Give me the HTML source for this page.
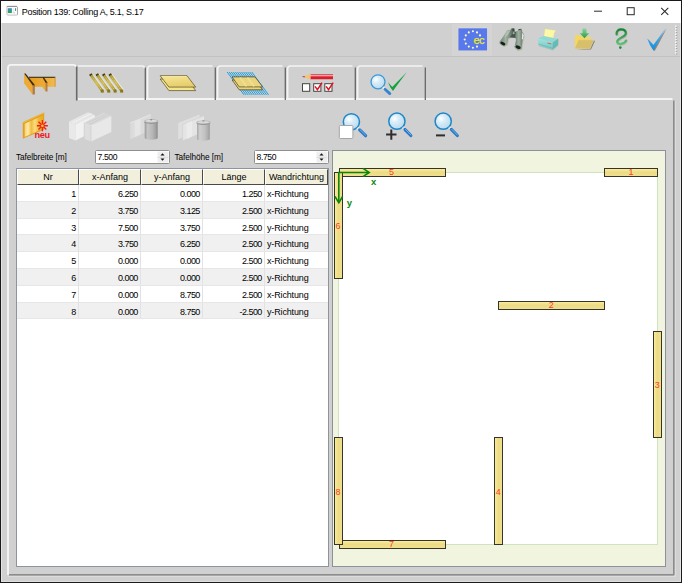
<!DOCTYPE html>
<html><head><meta charset="utf-8"><title>Position 139</title>
<style>
*{box-sizing:border-box;margin:0;padding:0}
html,body{width:682px;height:583px;overflow:hidden;background:#d0d0d0}
body{font-family:"Liberation Sans",sans-serif;font-size:9px;color:#000;position:relative}
.abs{position:absolute}
#win{position:absolute;left:0;top:0;width:682px;height:583px;border:1px solid #1a1a1a;background:#d0d0d0}
#title{position:absolute;left:1px;top:1px;width:680px;height:22px;background:#fff}
#title .t{position:absolute;left:20.7px;top:4.9px;font-size:9px;line-height:12px;white-space:nowrap;letter-spacing:-0.275px;color:#000}
#tbline{position:absolute;left:1px;top:56px;width:680px;height:1px;background:#c2c2c2}
.lbl{position:absolute;font-size:8.25px;line-height:12px;white-space:nowrap;letter-spacing:-0.07px}
.spin{position:absolute;height:14px;border:1px solid #8f8f8f;background:#fff;border-radius:1.5px}
.spin span{position:absolute;left:1.6px;top:0.4px;font-size:8.6px;line-height:12px;letter-spacing:-0.42px}
.spin svg{position:absolute;right:0;top:0}
/* table */
#grid{position:absolute;left:16px;top:168px;width:313px;height:399px;border:1px solid #8d949c;background:#fff}
.hd{position:absolute;top:0;height:16px;background:#f2f0dd;border-left:1px solid #fff;border-top:1px solid #fff;border-right:1px solid #4a4a4a;border-bottom:1px solid #4a4a4a;text-align:center;font-size:9px;line-height:14px;white-space:nowrap}
.row{position:absolute;left:0;width:311px;height:17px;border-bottom:1px solid #e6e6e6}
.row.alt{background:#f0f0f0}
.row span{position:absolute;top:0;height:100%;line-height:18px;font-size:9px;white-space:nowrap;border-right:1px solid #e2e2e2}
.row .n{text-align:right;padding-right:2.2px;letter-spacing:-0.55px}
.row .s{text-align:left;padding-left:2px;letter-spacing:-0.15px;border-right:none}
/* canvas */
#cv{position:absolute;left:332px;top:150px;width:334px;height:417px;border:1px solid #8a919b;background:#f1f4df}
</style></head><body>
<div id="win">
</div>
<div id="title"><div class="t">Position 139: Colling A, 5.1, S.17</div></div>
<div id="tbline"></div>
<svg id="tctl" class="abs" style="left:0;top:0" width="682" height="24" viewBox="0 0 682 24">
 <g id="appicon">
  <defs><linearGradient id="gApp" x1="0" y1="0" x2="0" y2="1"><stop offset="0" stop-color="#4a88c4"/><stop offset="0.5" stop-color="#2f9a90"/><stop offset="1" stop-color="#2ea44c"/></linearGradient></defs>
  <rect x="6.9" y="6.4" width="10.6" height="8.7" rx="1" fill="#fdfdfd" stroke="#b4b4b4" stroke-width="0.8"/>
  <path d="M6.8 6.4H17" stroke="#868686" stroke-width="0.9"/>
  <path d="M17.5 7V14.6" stroke="#a2a2a2" stroke-width="0.8"/>
  <rect x="7.8" y="8.2" width="4.1" height="4.8" fill="url(#gApp)"/>
  <rect x="15" y="8.2" width="1.1" height="2.7" fill="url(#gApp)"/>
  <rect x="13.1" y="8" width="0.4" height="5" fill="#cfcfcf"/>
  <rect x="13.4" y="12.4" width="1.4" height="0.9" fill="#bdbdbd"/>
 </g>
 <g stroke="#2a2a2a" stroke-width="1" fill="none">
  <path d="M594 11.2H602"/>
  <rect x="627.2" y="7.7" width="7" height="7"/>
  <path d="M661.2 7.8L668.3 14.9M668.3 7.8L661.2 14.9" stroke-width="1.05"/>
 </g>
</svg>
<div class="abs" style="left:1px;top:23px;width:1px;height:559px;background:#e4e4e4"></div>
<div class="abs" style="left:680px;top:23px;width:1px;height:559px;background:#e4e4e4"></div>
<div class="abs" style="left:1px;top:581px;width:680px;height:1px;background:#e0e0e0"></div>

<svg id="chrome" class="abs" style="left:0;top:0" width="682" height="583" viewBox="0 0 682 583">
 <g id="paneborder">
  <rect x="78" y="98" width="594.5" height="2" fill="#f4f4f4"/>
  <rect x="7" y="98" width="2" height="477" fill="#f2f2f2"/>
  <rect x="673" y="100.5" width="1" height="474.5" fill="#8c8c8c"/>
  <rect x="674" y="100.5" width="1" height="474.5" fill="#a8a8a8"/>
  <rect x="675" y="101" width="1" height="475" fill="#dcdcdc"/>
  <rect x="9" y="574" width="665" height="1" fill="#8c8c8c"/>
  <rect x="9" y="575" width="665" height="1" fill="#a8a8a8"/>
  <rect x="8" y="576" width="668" height="1" fill="#dcdcdc"/>
 </g>
 <g id="tabs">
  <path d="M8 99V68Q8 64.8 11 64.8H73.5Q75.5 64.8 75.8 67" stroke="#f5f5f5" stroke-width="1.8" fill="none"/>
  <path d="M76.7 66.5V100.5" stroke="#6a6a6a" stroke-width="1.6" fill="none"/>
  <path d="M78 66H142.5Q144.5 66 144.5 68.5" stroke="#f4f4f4" stroke-width="1.6" fill="none"/>
  <path d="M145.3 67.5V100" stroke="#626262" stroke-width="1.25" fill="none"/>
  <path d="M147.6 98V69Q147.6 66 150.5 66H212.5" stroke="#f4f4f4" stroke-width="1.6" fill="none"/>
  <path d="M215.3 67.5V100" stroke="#626262" stroke-width="1.25" fill="none"/>
  <path d="M217.6 98V69Q217.6 66 220.5 66H282.5" stroke="#f4f4f4" stroke-width="1.6" fill="none"/>
  <path d="M285.3 67.5V100" stroke="#626262" stroke-width="1.25" fill="none"/>
  <path d="M287.6 98V69Q287.6 66 290.5 66H352.5" stroke="#f4f4f4" stroke-width="1.6" fill="none"/>
  <path d="M355.3 67.5V100" stroke="#626262" stroke-width="1.25" fill="none"/>
  <path d="M357.6 98V69Q357.6 66 360.5 66H422.5" stroke="#f4f4f4" stroke-width="1.6" fill="none"/>
  <path d="M425.3 67.5V100" stroke="#626262" stroke-width="1.25" fill="none"/>
 </g>
</svg>
<svg id="tbicons" class="abs" style="left:440px;top:23px" width="241" height="34" viewBox="440 23 241 34">
 <defs>
  <linearGradient id="gBin" x1="0" y1="0" x2="1" y2="0"><stop offset="0" stop-color="#63786a"/><stop offset="0.45" stop-color="#a2b3a4"/><stop offset="1" stop-color="#566a5c"/></linearGradient>
  <linearGradient id="gPr" x1="0" y1="0" x2="0" y2="1"><stop offset="0" stop-color="#a6e2de"/><stop offset="1" stop-color="#6fc9c5"/></linearGradient>
  <linearGradient id="gQ" x1="0" y1="0" x2="0" y2="1"><stop offset="0" stop-color="#178537"/><stop offset="1" stop-color="#5cc274"/></linearGradient>
  <linearGradient id="gCk" x1="0" y1="0" x2="0" y2="1"><stop offset="0" stop-color="#74c8f6"/><stop offset="0.55" stop-color="#2ea4ea"/><stop offset="1" stop-color="#128ada"/></linearGradient>
  <linearGradient id="gAr" x1="0" y1="0" x2="0" y2="1"><stop offset="0" stop-color="#86d59a"/><stop offset="1" stop-color="#2c9c46"/></linearGradient>
 </defs>
 <rect x="452" y="24" width="40" height="32" fill="#d4d4d4"/>
 <g id="ec">
  <rect x="457.9" y="27.8" width="29.7" height="23.2" fill="#e6dfc6"/>
  <rect x="458.4" y="28.3" width="28.7" height="22.2" fill="#5878ee"/>
  <g fill="#fffcae"><circle cx="472.9" cy="31.3" r="1.05"/><circle cx="477.0" cy="32.4" r="1.05"/><circle cx="480.0" cy="35.4" r="1.05"/><circle cx="477.0" cy="46.6" r="1.05"/><circle cx="472.9" cy="47.7" r="1.05"/><circle cx="468.8" cy="46.6" r="1.05"/><circle cx="465.8" cy="43.6" r="1.05"/><circle cx="464.7" cy="39.5" r="1.05"/><circle cx="465.8" cy="35.4" r="1.05"/><circle cx="468.8" cy="32.4" r="1.05"/></g>
  <text x="473.6" y="43.9" font-family="'Liberation Sans',sans-serif" font-size="11" letter-spacing="-0.6" fill="#ecec1c" stroke="#ecec1c" stroke-width="0.25">ec</text>
 </g>
 <g id="bino">
  <g fill="#b5ab9c" opacity="0.6" transform="translate(0.7,0.9)">
   <path d="M506.9 30.4L512.2 29.3L513 33L509.8 37.4L508.2 38.6L507 44.6L503.2 46.2L499.4 42.2L503.2 36.4Z"/>
   <path d="M516 31.4L521 29.3L524 35L522.6 40.6L521.6 48.8L517.6 50.4L514.5 47L516 40L515 36.4Z"/>
  </g>
  <path d="M510 31.6L516.6 31.8L516.4 38L509.6 37.6Z" fill="#44564b"/>
  <path d="M511.3 28.4L514.3 28.2L514.8 31.6L511.6 31.8ZM518.2 29.2L521.2 28.8L521.8 31L518.6 31.6Z" fill="#3b4b41"/>
  <circle cx="513.6" cy="33.2" r="1.1" fill="#9fb0a2"/>
  <path d="M506.9 30.4L512.2 29.3L513 33L509.8 37.4L508.2 38.6L507 44.4L503.2 46L499.5 42.1L503.2 36.4Z" fill="url(#gBin)"/>
  <path d="M516 31.4L521 29.4L523.9 35L522.5 40.5L521.5 48.6L517.6 50.2L514.6 47L516 39.9L515.1 36.4Z" fill="url(#gBin)"/>
  <path d="M507.2 30.8L510.6 30L508 35L504.6 37.4Z" fill="#b9c7ba" opacity="0.8"/>
  <path d="M522.2 32.6L523.8 35.2L522.8 39.6L521.8 39.2Z" fill="#e2e9e2"/>
  <ellipse cx="502.8" cy="43.4" rx="3.6" ry="2.3" transform="rotate(28 502.8 43.4)" fill="#93a795"/>
  <ellipse cx="502.8" cy="43.5" rx="2.7" ry="1.5" transform="rotate(28 502.8 43.5)" fill="#14201a"/>
  <ellipse cx="518.1" cy="47.1" rx="3.7" ry="2.5" transform="rotate(18 518.1 47.1)" fill="#93a795"/>
  <ellipse cx="518.1" cy="47.2" rx="2.8" ry="1.6" transform="rotate(18 518.1 47.2)" fill="#14201a"/>
 </g>
 <g id="printer">
  <path d="M538.6 39.4L552.8 43.4L558.8 39.2L558.6 45.6L552.8 50.6L539 46.2Z" fill="#b9ae9e" opacity="0.6"/>
  <path d="M545 28.7L556 30.4Q554.6 31.6 554.2 33.6L553.4 38L543.8 36.4Z" fill="#fcf9a6" stroke="#d9d49a" stroke-width="0.4"/>
  <path d="M538 38.4L543.6 36L553.6 38.2L558.2 38.4L552.6 42.4Z" fill="#8fd8d4"/>
  <path d="M538 38.4L552.6 42.4L552.6 49.8L538.6 45.4Z" fill="url(#gPr)"/>
  <path d="M552.6 42.4L558.2 38.4L558 44.8L552.6 49.8Z" fill="#62bdb9"/>
  <path d="M538.4 44L552.6 48.2L558 43.6" stroke="#58b4b0" stroke-width="0.6" fill="none"/>
  <rect x="547.6" y="42.4" width="4" height="1.2" fill="#d26a5a" transform="rotate(15 547.6 42.4)"/>
 </g>
 <g id="folder">
  <path d="M576.4 49.4H591L595 41L594 40.4L590.4 48.6Z" fill="#6e675c" opacity="0.75"/>
  <path d="M574.9 35.2H580.6L582.4 37H589.2L589.8 36H590.4V48.4H574.9Z" fill="#f3d75e"/>
  <path d="M578.7 39.9H593.9L590 48.5H575Z" fill="#d8bf6c"/>
  <path d="M578.7 39.9H593.9" stroke="#e6cf7c" stroke-width="0.6"/>
  <path d="M582.5 28.6H586.4V33.3H589.2L584.5 38.2L579.8 33.3H582.5Z" fill="url(#gAr)"/>
 </g>
 <g id="qmark" fill="none" stroke-linecap="round">
  <path d="M616.6 34.4C616.2 30.6 618.8 29.4 621 29.4C624 29.4 625.8 31 625.8 33.3C625.8 36 622.2 37 619.6 38.6C617 40.2 616.4 42.2 618 43.4C620 44.8 624.6 43.6 626 40.6" stroke="#a89c92" stroke-width="2.2" opacity="0.6" transform="translate(0.7,0.6)"/>
  <path d="M616.6 34.4C616.2 30.6 618.8 29.4 621 29.4C624 29.4 625.8 31 625.8 33.3C625.8 36 622.2 37 619.6 38.6C617 40.2 616.4 42.2 618 43.4C620 44.8 624.6 43.6 626 40.6" stroke="url(#gQ)" stroke-width="2.2"/>
  <circle cx="620.3" cy="47.6" r="1.3" fill="#1c8a3c" stroke="none"/>
 </g>
 <g id="check">
  <path d="M647.1 38.4L653.3 44.9L665.8 28L657 45L653.8 50.8L650.4 45.4Z" fill="#7a6658" opacity="0.7" transform="translate(0.8,0.5)"/>
  <path d="M647.1 38.4L653.3 44.9L665.8 28L656.6 45L653.6 50.7L650.2 45.4Z" fill="url(#gCk)"/>
 </g>
 <g id="grip"><rect x="676" y="26.50" width="1.2" height="1.2" fill="#8a8a8a"/><rect x="675.1" y="25.60" width="1.5" height="1.5" fill="#fcfcfc"/><rect x="676" y="29.16" width="1.2" height="1.2" fill="#8a8a8a"/><rect x="675.1" y="28.26" width="1.5" height="1.5" fill="#fcfcfc"/><rect x="676" y="31.82" width="1.2" height="1.2" fill="#8a8a8a"/><rect x="675.1" y="30.92" width="1.5" height="1.5" fill="#fcfcfc"/><rect x="676" y="34.48" width="1.2" height="1.2" fill="#8a8a8a"/><rect x="675.1" y="33.58" width="1.5" height="1.5" fill="#fcfcfc"/><rect x="676" y="37.14" width="1.2" height="1.2" fill="#8a8a8a"/><rect x="675.1" y="36.24" width="1.5" height="1.5" fill="#fcfcfc"/><rect x="676" y="39.80" width="1.2" height="1.2" fill="#8a8a8a"/><rect x="675.1" y="38.90" width="1.5" height="1.5" fill="#fcfcfc"/><rect x="676" y="42.46" width="1.2" height="1.2" fill="#8a8a8a"/><rect x="675.1" y="41.56" width="1.5" height="1.5" fill="#fcfcfc"/><rect x="676" y="45.12" width="1.2" height="1.2" fill="#8a8a8a"/><rect x="675.1" y="44.22" width="1.5" height="1.5" fill="#fcfcfc"/><rect x="676" y="47.78" width="1.2" height="1.2" fill="#8a8a8a"/><rect x="675.1" y="46.88" width="1.5" height="1.5" fill="#fcfcfc"/><rect x="676" y="50.44" width="1.2" height="1.2" fill="#8a8a8a"/><rect x="675.1" y="49.54" width="1.5" height="1.5" fill="#fcfcfc"/><rect x="676" y="53.10" width="1.2" height="1.2" fill="#8a8a8a"/><rect x="675.1" y="52.20" width="1.5" height="1.5" fill="#fcfcfc"/></g>
</svg>
<svg id="icons" class="abs" style="left:0;top:60px" width="682" height="90" viewBox="0 60 682 90">
 <defs>
  <linearGradient id="gOr" x1="0" y1="0" x2="1" y2="0"><stop offset="0" stop-color="#e39c1e"/><stop offset="1" stop-color="#f2b94c"/></linearGradient>
  <linearGradient id="gBeam" x1="0" y1="0" x2="1" y2="1"><stop offset="0" stop-color="#a48e2a"/><stop offset="0.5" stop-color="#cdb954"/><stop offset="1" stop-color="#a8922c"/></linearGradient>
  <linearGradient id="gPl" x1="0" y1="0" x2="0.3" y2="1"><stop offset="0" stop-color="#f7e896"/><stop offset="1" stop-color="#e6cd6c"/></linearGradient>
  <linearGradient id="gPen" x1="0" y1="0" x2="0" y2="1"><stop offset="0" stop-color="#d8202c"/><stop offset="0.3" stop-color="#f7b8bc"/><stop offset="0.5" stop-color="#e02834"/><stop offset="0.8" stop-color="#d01824"/><stop offset="1" stop-color="#e85860"/></linearGradient>
  <radialGradient id="gLens" cx="0.36" cy="0.34" r="0.75"><stop offset="0" stop-color="#ffffff"/><stop offset="0.35" stop-color="#d8ecf8"/><stop offset="1" stop-color="#b4d8ee"/></radialGradient>
  <linearGradient id="gNeu" x1="0" y1="0" x2="1" y2="0"><stop offset="0" stop-color="#f6d070"/><stop offset="0.18" stop-color="#fdeaa8"/><stop offset="0.36" stop-color="#f0bc40"/><stop offset="0.55" stop-color="#fbdc80"/><stop offset="0.75" stop-color="#f0b838"/><stop offset="1" stop-color="#eaa922"/></linearGradient>
  <linearGradient id="gCan" x1="0" y1="0" x2="1" y2="0"><stop offset="0" stop-color="#9a9a9a"/><stop offset="0.22" stop-color="#c6c6c6"/><stop offset="0.6" stop-color="#b6b6b6"/><stop offset="0.85" stop-color="#a0a0a0"/><stop offset="1" stop-color="#8a8a8a"/></linearGradient>
  <linearGradient id="gCan2" x1="0" y1="0" x2="1" y2="0"><stop offset="0" stop-color="#a8a8a8"/><stop offset="0.22" stop-color="#d0d0d0"/><stop offset="0.6" stop-color="#c2c2c2"/><stop offset="0.85" stop-color="#aeaeae"/><stop offset="1" stop-color="#9a9a9a"/></linearGradient>
 </defs>
 <g id="t1">
  <path d="M29.3 77.6H55.1V86.8H29.3Z" fill="url(#gOr)"/>
  <path d="M29 77.3H55.3" stroke="#3c2a0c" stroke-width="1.1"/>
  <path d="M55.1 77.3V86.8" stroke="#c98a2a" stroke-width="0.8"/>
  <path d="M24.1 74L32.6 84.6V94.5L24.1 83.2Z" fill="#eda932"/>
  <path d="M32.5 85H34.9V94.5H32.5Z" fill="#b47c42"/>
  <path d="M24.1 73.6L25.6 73.6L35 85.2L32.6 85.2Z" fill="#3c2a0c"/>
  <path d="M42.2 77.2L45.6 82.4V91.5L42.2 86.8Z" fill="#eda932"/>
  <path d="M45.5 82.6H47.5V91.5H45.5Z" fill="#b47c42"/>
  <path d="M42.2 77L43.6 77L47.6 82.8L45.6 82.8Z" fill="#3c2a0c"/>
 </g>
 <g id="t2" fill="none"><path d="M92.20 74.2L104.00 90.4" stroke="#e6e6e6" stroke-width="1.8"/><path d="M90.70 74.6L102.30 91" stroke="url(#gBeam)" stroke-width="2.9"/><path d="M90.90 75L102.30 91" stroke="#e4d37a" stroke-width="0.8" stroke-dasharray="1.2 0.8"/><path d="M90.30 74L91.30 75.4" stroke="#463c12" stroke-width="2.9"/><rect x="100.80" y="89.60" width="3" height="3" fill="#8a7820"/><path d="M98.65 74.2L110.45 90.4" stroke="#e6e6e6" stroke-width="1.8"/><path d="M97.15 74.6L108.75 91" stroke="url(#gBeam)" stroke-width="2.9"/><path d="M97.35 75L108.75 91" stroke="#e4d37a" stroke-width="0.8" stroke-dasharray="1.2 0.8"/><path d="M96.75 74L97.75 75.4" stroke="#463c12" stroke-width="2.9"/><rect x="107.25" y="89.60" width="3" height="3" fill="#8a7820"/><path d="M105.10 74.2L116.90 90.4" stroke="#e6e6e6" stroke-width="1.8"/><path d="M103.60 74.6L115.20 91" stroke="url(#gBeam)" stroke-width="2.9"/><path d="M103.80 75L115.20 91" stroke="#e4d37a" stroke-width="0.8" stroke-dasharray="1.2 0.8"/><path d="M103.20 74L104.20 75.4" stroke="#463c12" stroke-width="2.9"/><rect x="113.70" y="89.60" width="3" height="3" fill="#8a7820"/><path d="M111.55 74.2L123.35 90.4" stroke="#e6e6e6" stroke-width="1.8"/><path d="M110.05 74.6L121.65 91" stroke="url(#gBeam)" stroke-width="2.9"/><path d="M110.25 75L121.65 91" stroke="#e4d37a" stroke-width="0.8" stroke-dasharray="1.2 0.8"/><path d="M109.65 74L110.65 75.4" stroke="#463c12" stroke-width="2.9"/><rect x="120.15" y="89.60" width="3" height="3" fill="#8a7820"/></g>
 <g id="t3">
  <path d="M160.2 79L187 79L195.7 90.6H168.9Z" fill="#f3e48e" stroke="#5a4a1e" stroke-width="0.7"/>
  <path d="M160.2 75.7L187 75.7L195.7 87.1H168.9Z" fill="url(#gPl)" stroke="#5a4a1e" stroke-width="0.7"/>
  <path d="M161.6 76.5H186.4" stroke="#fbf2b4" stroke-width="0.7"/>
 </g>
 <g id="t4">
  <path d="M227.20 72L244.00 94.9M229.25 72L246.05 94.9M231.30 72L248.10 94.9M233.35 72L250.15 94.9M235.40 72L252.20 94.9M237.45 72L254.25 94.9M239.50 72L256.30 94.9M241.55 72L258.35 94.9M243.60 72L260.40 94.9M245.65 72L262.45 94.9M247.70 72L264.50 94.9M249.75 72L266.55 94.9M251.80 72L268.60 94.9" stroke="#1f9fdf" stroke-width="1.0" fill="none"/>
  <path d="M232.1 80L255 80L262.7 89.8H239.2Z" fill="#e9d47c" stroke="#4c3f1a" stroke-width="0.7"/>
  <path d="M232.1 76.9L255 76.9L262.7 86.9H239.2Z" fill="#ead57e" stroke="#4c3f1a" stroke-width="0.7"/>
  <path d="M240 77.6L246.5 86.4M247.5 77.6L254 86.4" stroke="#f3e39a" stroke-width="1.6" opacity="0.8"/>
 </g>
 <g id="t5">
  <path d="M310.4 74.1H333V79.4H310.4Z" fill="url(#gPen)"/>
  <path d="M310.4 74.1L304.2 76.3L304.2 77.2L310.4 79.4Z" fill="#f1c372"/>
  <path d="M304.6 76.1L301.8 76.8L304.6 77.6Z" fill="#b8202a"/>
  <g fill="#fff" stroke="#444" stroke-width="1"><rect x="302.5" y="83.7" width="7.2" height="7.6"/><rect x="313.7" y="83.7" width="7.2" height="7.6"/><rect x="324.8" y="83.7" width="7.2" height="7.6"/></g>
  <path d="M315 86.4L317.4 89.6L322 82.6M326.1 86.4L328.5 89.6L333.2 82.6" stroke="#e01020" stroke-width="1.5" fill="none"/>
 </g>
 <g id="t6">
  <circle cx="378" cy="81.8" r="7" fill="url(#gLens)" stroke="#3a9ad8" stroke-width="1.3"/>
  <path d="M382.9 87.2L385.2 89.3" stroke="#f4f4f4" stroke-width="2"/>
  <path d="M385 89.2L389.8 93.6" stroke="#3a82d2" stroke-width="2.8" stroke-linecap="round"/>
  <path d="M388 82.2L392.3 87.1L406.7 72.3L395.4 87.6L393 91L390.4 87.4Z" fill="#12a23e"/>
 </g>
 <g id="neu">
  <path d="M22.8 122.2L44.2 112.5V129.6L22.8 138.8Z" fill="#e2a01e"/>
  <path d="M24.6 123.8L43.4 115.2V128.6L24.6 137Z" fill="url(#gNeu)"/>
  <path d="M22.8 122.2L44.2 112.5L44.2 113.6L22.8 123.4Z" fill="#eeb63a"/>
  <g stroke="#f0201e" stroke-width="1.35"><path d="M42.4 120.1V131.3M36.9 125.7H47.9M38.5 121.8L46.3 129.6M46.3 121.8L38.5 129.6"/></g>
  <circle cx="42.4" cy="125.7" r="1.3" fill="#f8d020"/>
  <text x="34.4" y="138" font-family="'Liberation Sans',sans-serif" font-size="9.2" font-weight="bold" letter-spacing="-0.35" fill="#ee1c1c">neu</text>
 </g>
 <g id="dis2">
  <path d="M69 121.5L88 112.2L94.8 115L75.5 124.5Z" fill="#e6e6e6"/>
  <path d="M69 121.5L75.5 124.5V140.5L69 138Z" fill="#e9e9e9"/>
  <path d="M75.5 124.5L94.8 115V131L75.5 140.5Z" fill="#f1f1f1"/>
  <path d="M72.2 123L91.4 113.6" stroke="#f4f4f4" stroke-width="0.8" fill="none"/>
  <path d="M84.2 122.5L104 112.5L111.3 116L91 126Z" fill="#dadada"/>
  <path d="M86.4 123.6L106.4 113.7M88.6 124.8L108.8 114.8" stroke="#c4c4c4" stroke-width="0.6" fill="none"/>
  <path d="M84.2 122.5L91 126V141.5L84.2 139Z" fill="#dedede"/>
  <path d="M91 126L111.3 116V132L91 141.5Z" fill="#e8e8e8"/>
  <path d="M91 126V141.5M84.2 122.5V139" stroke="#cacaca" stroke-width="0.6" fill="none"/>
 </g>
 <g id="dis3">
  <path d="M130.3 122.9L150.8 114.5V130L130.3 139.2Z" fill="#dbdbdb"/>
  <path d="M134.6 121.4L140.6 118.9V134.6L134.6 137.2Z" fill="#e5e5e5"/>
  <path d="M130.3 122.9L150.8 114.5" stroke="#e6e6e6" stroke-width="0.9"/>
  <path d="M144.7 121.4V137.6Q144.7 138.8 146.0 139.0Q151.2 140.5 156.4 139.0Q157.7 138.8 157.7 137.6V121.4Z" fill="url(#gCan)"/>
  <path d="M144.4 122.4Q151.2 124.4 158.0 122.4" stroke="#8a8a8a" stroke-width="0.9" fill="none"/>
  <ellipse cx="151.2" cy="121.2" rx="7.0" ry="1.5" fill="#d2d2d2" stroke="#9e9e9e" stroke-width="0.5"/>
  <ellipse cx="151.2" cy="120.7" rx="5.2" ry="0.7" fill="#e0e0e0"/>
  <ellipse cx="151.2" cy="119.7" rx="1.2" ry="0.7" fill="#8e8e8e"/>
 </g>
 <g id="dis4">
  <path d="M178.2 122.9L199.5 114.5V130L178.2 139.2Z" fill="#dfdfdf"/>
  <path d="M182.6 124.4L204 115.6V131.4L182.6 140.6Z" fill="#e4e4e4"/>
  <path d="M186.6 122.8L192 120.6V136.6L186.6 138.9Z" fill="#ebebeb"/>
  <path d="M182.6 124.4L204 115.6M182.6 124.4V140.4" stroke="#cecece" stroke-width="0.6" fill="none"/>
  <path d="M197.0 122.6V138.7Q197.0 139.9 198.3 140.1Q203.4 141.6 208.5 140.1Q209.8 139.9 209.8 138.7V122.6Z" fill="url(#gCan2)"/>
  <path d="M196.7 123.6Q203.4 125.6 210.1 123.6" stroke="#8a8a8a" stroke-width="0.9" fill="none"/>
  <ellipse cx="203.4" cy="122.4" rx="6.9" ry="1.5" fill="#d2d2d2" stroke="#9e9e9e" stroke-width="0.5"/>
  <ellipse cx="203.4" cy="121.9" rx="5.1" ry="0.7" fill="#e0e0e0"/>
  <ellipse cx="203.4" cy="120.9" rx="1.2" ry="0.7" fill="#8e8e8e"/>
 </g>
 <g>
  <circle cx="351.4" cy="121.8" r="8.1" fill="url(#gLens)" stroke="#1c86c9" stroke-width="1.5"/>
  <path d="M357.40 127.68L359.69 129.91" stroke="#f4f4f4" stroke-width="2.2"/>
  <path d="M357.40 127.68L359.69 129.91" stroke="#8a8a8a" stroke-width="0.5"/>
  <path d="M359.69 129.91L365.60 135.70" stroke="#2a78c6" stroke-width="3.2" stroke-linecap="round"/>
  <path d="M359.97 129.63L365.88 135.41" stroke="#6fb4ec" stroke-width="1"/>
 </g>
 <rect x="339.3" y="125.5" width="13.6" height="13" rx="1" fill="#fff" stroke="#a2a6aa" stroke-width="1"/>
 <g>
  <circle cx="396.9" cy="121.2" r="8.1" fill="url(#gLens)" stroke="#1c86c9" stroke-width="1.5"/>
  <path d="M402.75 127.22L404.99 129.52" stroke="#f4f4f4" stroke-width="2.2"/>
  <path d="M402.75 127.22L404.99 129.52" stroke="#8a8a8a" stroke-width="0.5"/>
  <path d="M404.99 129.52L410.80 135.50" stroke="#2a78c6" stroke-width="3.2" stroke-linecap="round"/>
  <path d="M405.27 129.24L411.09 135.22" stroke="#6fb4ec" stroke-width="1"/>
 </g>
 <path d="M386.1 134.6H396.5M391.3 129.6V139.7" stroke="#2e2e2e" stroke-width="2" fill="none"/>
 <g>
  <circle cx="443.2" cy="121.2" r="8.1" fill="url(#gLens)" stroke="#1c86c9" stroke-width="1.5"/>
  <path d="M449.10 127.18L451.34 129.46" stroke="#f4f4f4" stroke-width="2.2"/>
  <path d="M449.10 127.18L451.34 129.46" stroke="#8a8a8a" stroke-width="0.5"/>
  <path d="M451.34 129.46L457.30 135.50" stroke="#2a78c6" stroke-width="3.2" stroke-linecap="round"/>
  <path d="M451.63 129.18L457.58 135.22" stroke="#6fb4ec" stroke-width="1"/>
 </g>
 <path d="M436 135.4H445" stroke="#2e2e2e" stroke-width="2" fill="none"/>
</svg>
<div class="lbl" style="left:16px;top:152.2px">Tafelbreite [m]</div>
<div class="spin" style="left:95px;top:150px;width:75px"><span>7.500</span><svg width="12" height="12" viewBox="0 0 12 12"><rect x="0.6" y="0.4" width="10.8" height="11.2" fill="#eeeeee"/><rect x="0.6" y="0.4" width="10.8" height="0.8" fill="#fafafa"/><rect x="0.6" y="5.9" width="10.8" height="0.7" fill="#d6d6d6"/><path d="M3.4 4.5L5.5 2.2L7.6 4.5Z" fill="#111"/><path d="M3.5 7.6L5.5 9.7L7.5 7.6Z" fill="#111"/></svg></div>
<div class="lbl" style="left:174.4px;top:152.2px">Tafelhöhe [m]</div>
<div class="spin" style="left:254px;top:150px;width:75px"><span>8.750</span><svg width="12" height="12" viewBox="0 0 12 12"><rect x="0.6" y="0.4" width="10.8" height="11.2" fill="#eeeeee"/><rect x="0.6" y="0.4" width="10.8" height="0.8" fill="#fafafa"/><rect x="0.6" y="5.9" width="10.8" height="0.7" fill="#d6d6d6"/><path d="M3.4 4.5L5.5 2.2L7.6 4.5Z" fill="#111"/><path d="M3.5 7.6L5.5 9.7L7.5 7.6Z" fill="#111"/></svg></div>

<div id="grid">
 <div class="hd" style="left:0;width:62px">Nr</div>
 <div class="hd" style="left:62px;width:62px">x-Anfang</div>
 <div class="hd" style="left:124px;width:62px">y-Anfang</div>
 <div class="hd" style="left:186px;width:62px">Länge</div>
 <div class="hd" style="left:248px;width:63px">Wandrichtung</div>
 <div class="row" style="top:16px;height:17px"><span class="n" style="left:0;width:62px">1</span><span class="n" style="left:62px;width:62px">6.250</span><span class="n" style="left:124px;width:62px">0.000</span><span class="n" style="left:186px;width:62px">1.250</span><span class="s" style="left:248px;width:63px">x-Richtung</span></div>
 <div class="row alt" style="top:33px;height:17px"><span class="n" style="left:0;width:62px">2</span><span class="n" style="left:62px;width:62px">3.750</span><span class="n" style="left:124px;width:62px">3.125</span><span class="n" style="left:186px;width:62px">2.500</span><span class="s" style="left:248px;width:63px">x-Richtung</span></div>
 <div class="row" style="top:50px;height:16px"><span class="n" style="left:0;width:62px">3</span><span class="n" style="left:62px;width:62px">7.500</span><span class="n" style="left:124px;width:62px">3.750</span><span class="n" style="left:186px;width:62px">2.500</span><span class="s" style="left:248px;width:63px">y-Richtung</span></div>
 <div class="row alt" style="top:66px;height:17px"><span class="n" style="left:0;width:62px">4</span><span class="n" style="left:62px;width:62px">3.750</span><span class="n" style="left:124px;width:62px">6.250</span><span class="n" style="left:186px;width:62px">2.500</span><span class="s" style="left:248px;width:63px">y-Richtung</span></div>
 <div class="row" style="top:83px;height:17px"><span class="n" style="left:0;width:62px">5</span><span class="n" style="left:62px;width:62px">0.000</span><span class="n" style="left:124px;width:62px">0.000</span><span class="n" style="left:186px;width:62px">2.500</span><span class="s" style="left:248px;width:63px">x-Richtung</span></div>
 <div class="row alt" style="top:100px;height:17px"><span class="n" style="left:0;width:62px">6</span><span class="n" style="left:62px;width:62px">0.000</span><span class="n" style="left:124px;width:62px">0.000</span><span class="n" style="left:186px;width:62px">2.500</span><span class="s" style="left:248px;width:63px">y-Richtung</span></div>
 <div class="row" style="top:117px;height:17px"><span class="n" style="left:0;width:62px">7</span><span class="n" style="left:62px;width:62px">0.000</span><span class="n" style="left:124px;width:62px">8.750</span><span class="n" style="left:186px;width:62px">2.500</span><span class="s" style="left:248px;width:63px">x-Richtung</span></div>
 <div class="row alt" style="top:134px;height:16px"><span class="n" style="left:0;width:62px">8</span><span class="n" style="left:62px;width:62px">0.000</span><span class="n" style="left:124px;width:62px">8.750</span><span class="n" style="left:186px;width:62px">-2.500</span><span class="s" style="left:248px;width:63px">y-Richtung</span></div>
</div>
<div id="cv"></div>
<svg id="cvs" class="abs" style="left:333px;top:151px" width="332" height="415" viewBox="333 151 332 415">
 <defs>
  <linearGradient id="gh" x1="0" y1="0" x2="0" y2="1"><stop offset="0" stop-color="#fdef9e"/><stop offset="0.45" stop-color="#ecdb86"/><stop offset="1" stop-color="#f0df8c"/></linearGradient>
  <linearGradient id="gv" x1="0" y1="0" x2="1" y2="0"><stop offset="0" stop-color="#fdef9e"/><stop offset="0.45" stop-color="#ecdb86"/><stop offset="1" stop-color="#f0df8c"/></linearGradient>
 </defs>
 <rect x="338.5" y="172.5" width="319" height="372" fill="#fff" stroke="#cfe3bf" stroke-width="1"/>
 <g stroke="#36342a" stroke-width="1">
  <rect x="604.5" y="168.5" width="53" height="8" fill="url(#gh)"/>
  <rect x="498.5" y="301.5" width="106" height="8" fill="url(#gh)"/>
  <rect x="653.5" y="331.5" width="8" height="106" fill="url(#gv)"/>
  <rect x="494.5" y="437.5" width="8" height="107" fill="url(#gv)"/>
  <rect x="339.5" y="168.5" width="106" height="8" fill="url(#gh)"/>
  <rect x="334.5" y="172.5" width="8" height="106" fill="url(#gv)"/>
  <rect x="339.5" y="540.5" width="106" height="8" fill="url(#gh)"/>
  <rect x="334.5" y="437.5" width="8" height="107" fill="url(#gv)"/>
 </g>
 <g font-family="'Liberation Sans',sans-serif" font-size="9" fill="#ff3a22" text-anchor="middle">
  <text x="631" y="175.3">1</text>
  <text x="551.3" y="308.3">2</text>
  <text x="657.3" y="388.3">3</text>
  <text x="498.2" y="494.5">4</text>
  <text x="391.6" y="175.3">5</text>
  <text x="338.1" y="229">6</text>
  <text x="391.6" y="547.3">7</text>
  <text x="338.1" y="494.5">8</text>
 </g>
 <g stroke="#0a860a" stroke-width="1.6" fill="none">
  <path d="M338.8 202.5V172.5H369"/>
  <path d="M363 168.3L369.2 172.5L363 176.7"/>
  <path d="M335 196.5L338.8 202.8L342.6 196.5"/>
 </g>
 <g font-family="'Liberation Sans',sans-serif" font-size="9.5" font-weight="bold" fill="#0a8a0a">
  <text x="371" y="185.3">x</text>
  <text x="346.8" y="205.6">y</text>
 </g>
</svg>
</body></html>
